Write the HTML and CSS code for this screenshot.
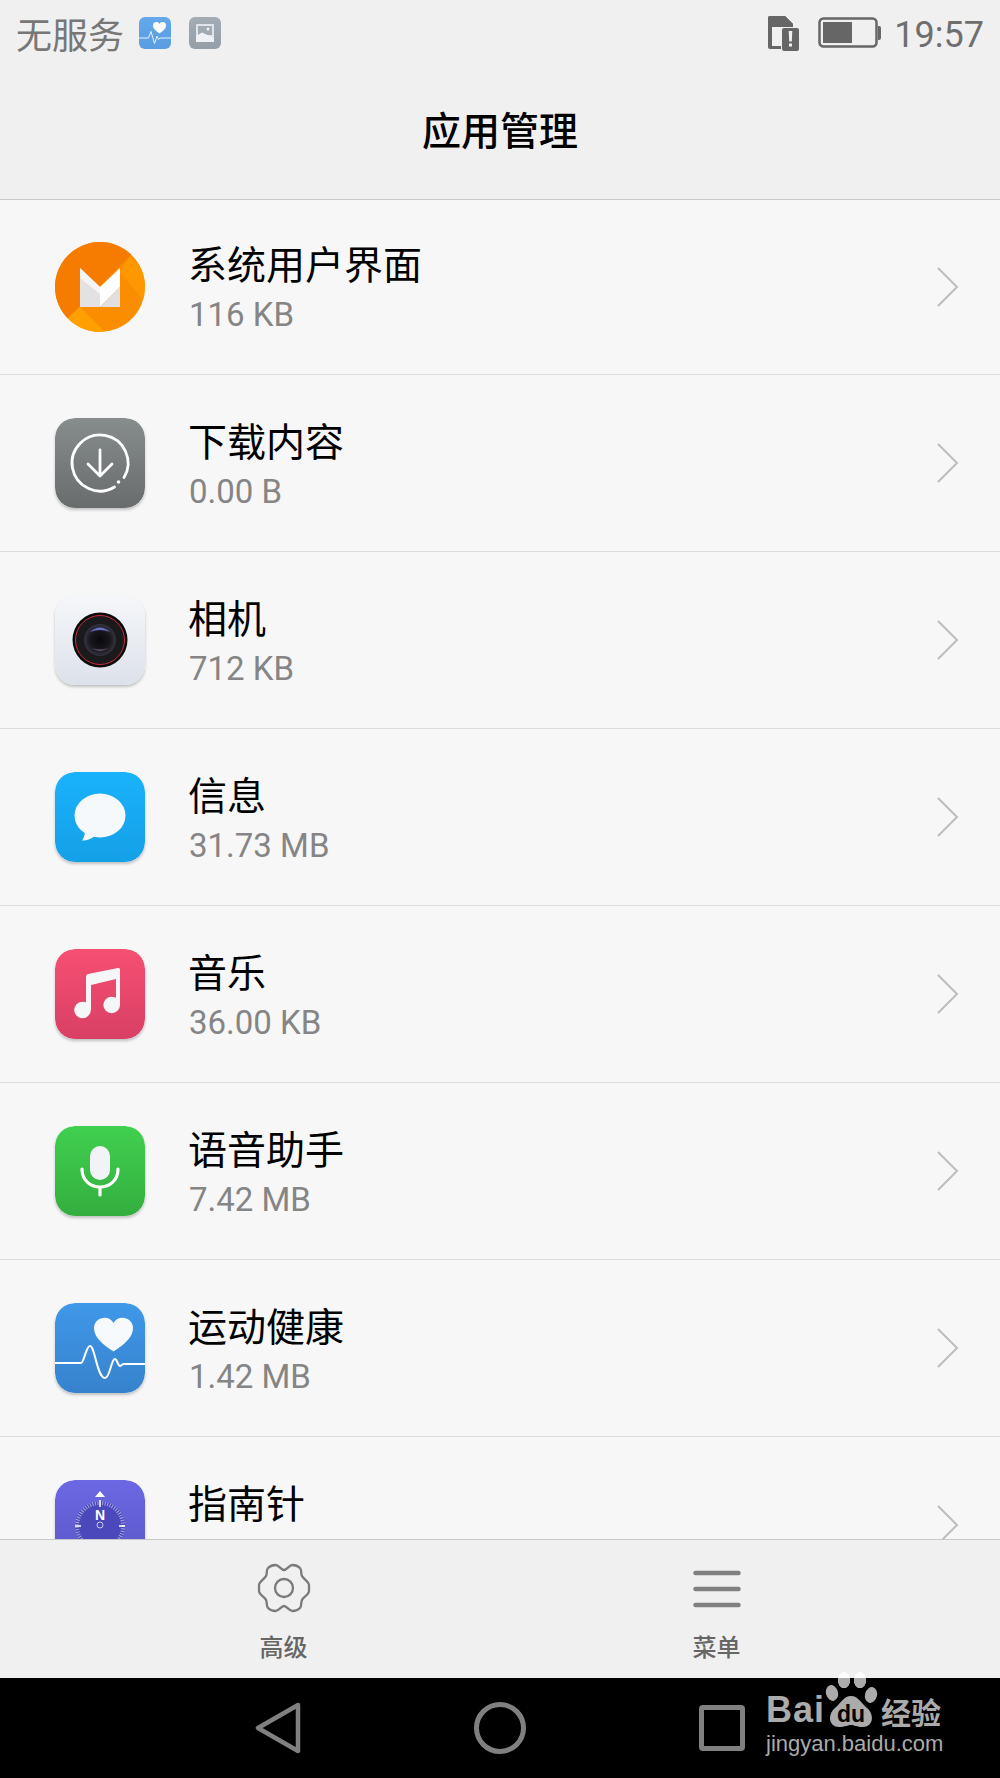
FILE: index.html
```html
<!DOCTYPE html>
<html lang="zh">
<head>
    <meta charset="utf-8">
    <title>应用管理</title>
    <link rel="stylesheet" href="styles.css">
</head>
<body>
<svg class="defs" width="0" height="0">
    <symbol id="chevron" viewBox="0 0 22 40">
        <path d="M1 1L20 20L1 39" fill="none" stroke="#bdbdbd" stroke-width="2"/>
    </symbol>
</svg>
<div class="screen">
    <header class="top">
        <div class="status">
            <div class="status-left">
                <span class="carrier">无服务</span>
                <svg class="note-icon" viewBox="0 0 32 32">
                    <defs><linearGradient id="nh" x1="0" y1="0" x2="0" y2="1"><stop offset="0" stop-color="#63a9ec"/><stop offset="1" stop-color="#5a9ce0"/></linearGradient></defs>
                    <rect width="32" height="32" rx="6" fill="url(#nh)"/>
                    <path d="M20.500 16.500C17 14 14 11.500 14 8.500C14 4.500 19 4 20.500 7C22 4 27 4.500 27 8.500C27 11.500 24 14 20.500 16.500Z" fill="#fff"/>
                    <path d="M0 21H9.500L12 14.500L15.500 26.500L18 19L19.500 22.500L21 21H32" fill="none" stroke="#e6f1fb" stroke-width="1"/>
                </svg>
                <svg class="note-icon" viewBox="0 0 32 32">
                    <defs><linearGradient id="ng" x1="0" y1="0" x2="0" y2="1"><stop offset="0" stop-color="#a3adb5"/><stop offset="1" stop-color="#949ea7"/></linearGradient></defs>
                    <rect width="32" height="32" rx="6" fill="url(#ng)"/>
                    <rect x="7" y="7" width="18" height="18" rx="1" fill="#dfe5ea"/>
                    <rect x="9" y="9" width="14" height="9" fill="#a0aab3"/>
                    <circle cx="19" cy="12" r="1.500" fill="#eef2f5"/>
                    <path d="M7 19L13 15.500L25 21V25H7Z" fill="#eef2f5"/>
                </svg>
            </div>
            <div class="status-right">
                <svg class="sim-icon" viewBox="0 0 32 36">
                    <path fill-rule="evenodd" d="M3 1H18L26 9V12H19V5H5V31H14V34H3Q1 34 1 32V3Q1 1 3 1Z" fill="#666"/>
                    <path d="M1 3Q1 1 3 1H18L26 9V12H1Z" fill="#666"/>
                    <rect x="15" y="13" width="17" height="23" rx="2" fill="#666"/>
                    <path d="M21.700 16H25.300L24.800 26.500H22.200Z" fill="#f0f0f0"/>
                    <rect x="22" y="28.500" width="3" height="3" fill="#f0f0f0"/>
                </svg>
                <svg class="battery-icon" viewBox="0 0 63 32">
                    <rect x="1.500" y="1.500" width="57" height="28" rx="4" fill="none" stroke="#666" stroke-width="2.500"/>
                    <rect x="5" y="5" width="29" height="21" fill="#666"/>
                    <path d="M60 9H61Q63 9 63 11V21Q63 23 61 23H60Z" fill="#666"/>
                </svg>
                <span class="clock">19:57</span>
            </div>
        </div>
        <h1 class="page-title">应用管理</h1>
    </header>

    <main class="list">
        <div class="row">
            <svg class="app-icon" viewBox="0 0 90 90">
                <defs><clipPath id="mclip"><circle cx="45" cy="45" r="45"/></clipPath></defs>
                <g clip-path="url(#mclip)">
                    <rect width="90" height="90" fill="#fb8e00"/>
                    <path d="M75 14L90 29V60L65 30Z" fill="#ff9800"/>
                    <path d="M0 90L13 76L75 14L90 0H0Z" fill="#f57c00"/>
                    <path d="M13 76L25 65L50 90H20Z" fill="#ffa000"/>
                </g>
                <path d="M25 26L45 45V65H25Z" fill="#e2e2e2"/>
                <path d="M25 26L45 45V52L25 36Z" fill="#f5f5f5"/>
                <path d="M65 26V45L45 65V45Z" fill="#fff"/>
                <path d="M65 45V65H45Z" fill="#e0e0e0"/>
            </svg>
            <div class="row-text">
                <div class="app-name">系统用户界面</div>
                <div class="app-size">116 KB</div>
            </div>
            <svg class="chevron"><use href="#chevron"/></svg>
        </div>
        <div class="row">
            <svg class="app-icon squircle" viewBox="0 0 90 90">
                <defs><linearGradient id="g1" x1="0" y1="0" x2="0" y2="1"><stop offset="0" stop-color="#878c8c"/><stop offset="1" stop-color="#686c6c"/></linearGradient></defs>
                <rect width="90" height="90" rx="20" fill="url(#g1)"/>
                <path d="M59.500 69A28 28 0 1 1 69 59.500" fill="none" stroke="#fff" stroke-width="2.800" stroke-linecap="round"/>
                <circle cx="63.500" cy="64" r="1.800" fill="#fff"/>
                <path d="M45 32V58M33 46L45 58L57 46" fill="none" stroke="#fff" stroke-width="2.800" stroke-linecap="round" stroke-linejoin="round"/>
            </svg>
            <div class="row-text">
                <div class="app-name">下载内容</div>
                <div class="app-size">0.00 B</div>
            </div>
            <svg class="chevron"><use href="#chevron"/></svg>
        </div>
        <div class="row">
            <svg class="app-icon squircle" viewBox="0 0 90 90">
                <defs>
                    <linearGradient id="g2" x1="0" y1="0" x2="0" y2="1"><stop offset="0" stop-color="#f5f7fa"/><stop offset="1" stop-color="#dde1e9"/></linearGradient>
                    <radialGradient id="lens" cx=".5" cy=".5" r=".5"><stop offset="0" stop-color="#08080a"/><stop offset=".6" stop-color="#18171c"/><stop offset="1" stop-color="#34323e"/></radialGradient>
                </defs>
                <rect width="90" height="90" rx="20" fill="url(#g2)"/>
                <circle cx="45" cy="45" r="27.500" fill="#0b0b0b"/>
                <circle cx="45" cy="45" r="24.500" fill="#1a1a1c" stroke="#c9303f" stroke-width="1"/>
                <circle cx="45" cy="45" r="16" fill="url(#lens)"/>
                <path d="M35 37Q45 28 55 37Q45 33 35 37Z" fill="#6a70c4"/>
                <path d="M37 53Q45 59 53 53Q45 56 37 53Z" fill="#6a5570"/>
            </svg>
            <div class="row-text">
                <div class="app-name">相机</div>
                <div class="app-size">712 KB</div>
            </div>
            <svg class="chevron"><use href="#chevron"/></svg>
        </div>
        <div class="row">
            <svg class="app-icon squircle" viewBox="0 0 90 90">
                <defs><linearGradient id="g3" x1="0" y1="0" x2="0" y2="1"><stop offset="0" stop-color="#1ab2fc"/><stop offset="1" stop-color="#14a0e6"/></linearGradient></defs>
                <rect width="90" height="90" rx="20" fill="url(#g3)"/>
                <ellipse cx="45" cy="43.500" rx="25.500" ry="22" fill="#f5f9fc"/>
                <path d="M30 57Q30 65 27 68.500Q33 69 40 64Z" fill="#f5f9fc"/>
            </svg>
            <div class="row-text">
                <div class="app-name">信息</div>
                <div class="app-size">31.73 MB</div>
            </div>
            <svg class="chevron"><use href="#chevron"/></svg>
        </div>
        <div class="row">
            <svg class="app-icon squircle" viewBox="0 0 90 90">
                <defs><linearGradient id="g4" x1="0" y1="0" x2="0" y2="1"><stop offset="0" stop-color="#f64f73"/><stop offset="1" stop-color="#d84064"/></linearGradient></defs>
                <rect width="90" height="90" rx="20" fill="url(#g4)"/>
                <circle cx="27.500" cy="61" r="8.300" fill="#f5f6f8"/>
                <circle cx="56.700" cy="56" r="8.300" fill="#f5f6f8"/>
                <path d="M31 60V28Q31 25.500 33 25L63 19Q65 18.600 65 20.500V57H61V30L36 36V61Z" fill="#f5f6f8"/>
            </svg>
            <div class="row-text">
                <div class="app-name">音乐</div>
                <div class="app-size">36.00 KB</div>
            </div>
            <svg class="chevron"><use href="#chevron"/></svg>
        </div>
        <div class="row">
            <svg class="app-icon squircle" viewBox="0 0 90 90">
                <defs><linearGradient id="g5" x1="0" y1="0" x2="0" y2="1"><stop offset="0" stop-color="#40d04f"/><stop offset="1" stop-color="#34ae3f"/></linearGradient></defs>
                <rect width="90" height="90" rx="20" fill="url(#g5)"/>
                <rect x="35" y="20" width="20" height="34" rx="10" fill="#f1f3f6"/>
                <path d="M27 43C27 54 35 61 45 61C55 61 63 54 63 43M45 61V69" fill="none" stroke="#fff" stroke-width="3.200" stroke-linecap="round"/>
            </svg>
            <div class="row-text">
                <div class="app-name">语音助手</div>
                <div class="app-size">7.42 MB</div>
            </div>
            <svg class="chevron"><use href="#chevron"/></svg>
        </div>
        <div class="row">
            <svg class="app-icon squircle" viewBox="0 0 90 90">
                <defs><linearGradient id="g6" x1="0" y1="0" x2="0" y2="1"><stop offset="0" stop-color="#3f98e9"/><stop offset="1" stop-color="#3782cd"/></linearGradient></defs>
                <rect width="90" height="90" rx="20" fill="url(#g6)"/>
                <path d="M58.500 48.500C47 41 39 34 39 25C39 14 54 11 58.500 20C63 11 78 14 78 25C78 34 70 41 58.500 48.500Z" fill="#f6fafd"/>
                <path d="M0 60H26C29 60 31 43 35 43C40 43 42 75 50 75C55 75 56 56 60 56C62 56 63 63 65 63C66 63 67 61 69 61H90" fill="none" stroke="#fff" stroke-width="2"/>
            </svg>
            <div class="row-text">
                <div class="app-name">运动健康</div>
                <div class="app-size">1.42 MB</div>
            </div>
            <svg class="chevron"><use href="#chevron"/></svg>
        </div>
        <div class="row">
            <svg class="app-icon squircle" viewBox="0 0 90 90">
                <defs><linearGradient id="g7" x1="0" y1="0" x2="0" y2="1"><stop offset="0" stop-color="#6c68e4"/><stop offset="1" stop-color="#5856c4"/></linearGradient></defs>
                <rect width="90" height="90" rx="20" fill="url(#g7)"/>
                <circle cx="45" cy="46" r="25" fill="#4a48ba"/>
                <circle cx="45" cy="46" r="23" fill="none" stroke="#a9a8e2" stroke-width="4" stroke-dasharray="1 1.500"/>
                <path d="M45 11L50 17H40Z" fill="#fff"/>
                <path d="M45 20V27M20 46H26M64 46H70" stroke="#fff" stroke-width="1.500"/>
                <text class="compass-n" x="45" y="40" text-anchor="middle">N</text>
                <circle cx="45" cy="45" r="3" fill="none" stroke="#c9c8ee" stroke-width="1"/>
            </svg>
            <div class="row-text">
                <div class="app-name">指南针</div>
                <div class="app-size">&nbsp;</div>
            </div>
            <svg class="chevron"><use href="#chevron"/></svg>
        </div>
    </main>

    <footer class="actions">
        <div class="action">
            <svg class="action-icon" viewBox="0 0 54 50">
                <path d="M27 7C30 7 32 2 35.500 2C38 2 41 3 43 5C45 7 43.500 10 45 13C46.500 16 52 18.500 52 22V28C52 31.500 46.500 34 45 37C43.500 40 45 43 43 45C41 47 38 48 35.500 48C32 48 30 43 27 43C24 43 22 48 18.500 48C16 48 13 47 11 45C9 43 10.500 40 9 37C7.500 34 2 31.500 2 28V22C2 18.500 7.500 16 9 13C10.500 10 9 7 11 5C13 3 16 2 18.500 2C22 2 24 7 27 7Z" fill="none" stroke="#7a7a7a" stroke-width="2.300"/>
                <circle cx="27" cy="25" r="9" fill="none" stroke="#7a7a7a" stroke-width="2.300"/>
            </svg>
            <span class="action-label">高级</span>
        </div>
        <div class="action">
            <svg class="action-icon" viewBox="0 0 54 50">
                <path d="M5.500 10H48.500M5.500 26H48.500M5.500 42H48.500" stroke="#808080" stroke-width="4.500" stroke-linecap="round"/>
            </svg>
            <span class="action-label">菜单</span>
        </div>
    </footer>

    <nav class="navbar">
        <svg class="nav-back" viewBox="0 0 46 52">
            <path d="M43 3L3 26L43 49Z" fill="none" stroke="#808080" stroke-width="4.500" stroke-linejoin="round"/>
        </svg>
        <div class="nav-home"></div>
        <div class="nav-recent"></div>
    </nav>

    <div class="watermark">
        <div class="wm-brand">
            <span class="wm-bai">Bai</span>
            <svg class="wm-paw" viewBox="0 0 56 58">
                <defs><clipPath id="overbar"><rect x="0" y="6" width="56" height="52"/></clipPath></defs>
                <ellipse cx="19" cy="8" rx="6" ry="8" fill="#fff"/>
                <ellipse cx="35" cy="8" rx="6" ry="8" fill="#fff"/>
                <ellipse cx="7" cy="21" rx="6" ry="8" fill="#ababab" transform="rotate(-15 7 21)"/>
                <g clip-path="url(#overbar)">
                    <ellipse cx="19" cy="8" rx="6" ry="8" fill="#ababab"/>
                    <ellipse cx="35" cy="8" rx="6" ry="8" fill="#ababab"/>
                </g>
                <ellipse cx="46" cy="23" rx="6" ry="8" fill="#ababab" transform="rotate(15 46 23)"/>
                <path d="M26 24C33 24 35 30 42 36C50 43 48 55 38 55C32 55 29 53 26 53C23 53 20 55 14 55C4 55 2 43 10 36C17 30 19 24 26 24Z" fill="#ababab"/>
                <text class="wm-du" x="26" y="50" text-anchor="middle">du</text>
            </svg>
            <span class="wm-jy">经验</span>
        </div>
        <div class="wm-url">jingyan.baidu.com</div>
    </div>
</div>
</body>
</html>
```

FILE: styles.css
```css
body {
    margin: 0;
    font-family: "Noto Sans CJK SC", sans-serif;
}
.defs {
    position: absolute;
}
.screen {
    position: relative;
    display: flex;
    flex-direction: column;
    width: 1000px;
    height: 1778px;
    overflow: hidden;
    background-color: #f7f7f7;
}

/* top bar */
.top {
    flex: none;
    height: 199px;
    background-color: #f0f0f0;
    border-bottom: 1px solid #c8c8c8;
}
.status {
    display: flex;
    justify-content: space-between;
    align-items: center;
    height: 66px;
    padding: 0 16px;
}
.status-left, .status-right {
    display: flex;
    align-items: center;
}
.carrier {
    font-size: 36px;
    line-height: 66px;
    color: #777;
}
.note-icon {
    width: 32px;
    height: 32px;
    margin-left: 18px;
}
.carrier + .note-icon {
    margin-left: 15px;
}
.sim-icon {
    width: 32px;
    height: 36px;
}
.battery-icon {
    width: 63px;
    height: 32px;
    margin-left: 19px;
}
.clock {
    margin-left: 13px;
    padding-top: 3px;
    font-family: Roboto, sans-serif;
    font-size: 36px;
    color: #6e6e6e;
}
.page-title {
    margin: 0;
    font-size: 39px;
    font-weight: 500;
    line-height: 125px;
    text-align: center;
    color: #000;
}

/* list */
.list {
    flex: 1;
    min-height: 0;
    overflow: hidden;
}
.row {
    display: flex;
    align-items: center;
    box-sizing: border-box;
    flex: none;
    height: 177px;
    padding: 0 41px 0 55px;
    border-bottom: 1px solid #dcdcdc;
}
.row:first-child {
    height: 175px;
}
.app-icon {
    flex: none;
    width: 90px;
    height: 90px;
}
.squircle {
    border-radius: 20px;
    box-shadow: 0 2px 3px rgba(0, 0, 0, 0.22);
}
.row-text {
    margin-left: 44px;
    margin-top: 2px;
}
.row:first-child .row-text {
    margin-top: 0;
}
.app-name {
    margin-bottom: 5px;
    margin-left: -1px;
    font-size: 39px;
    line-height: 50px;
    color: #000;
}
.app-size {
    font-family: Roboto, sans-serif;
    font-size: 33px;
    line-height: 46px;
    color: #858585;
}
.chevron {
    flex: none;
    width: 22px;
    height: 40px;
    margin-left: auto;
}
.compass-n {
    font-family: "Liberation Sans", sans-serif;
    font-size: 14px;
    font-weight: bold;
    fill: #fff;
}

/* bottom actions */
.actions {
    flex: none;
    display: flex;
    box-sizing: border-box;
    height: 139px;
    padding: 0 67px;
    background-color: #f0f0f0;
    border-top: 1px solid #c8c8c8;
}
.action {
    flex: 1;
    display: flex;
    flex-direction: column;
    align-items: center;
    padding-top: 23px;
}
.action-icon {
    width: 54px;
    height: 50px;
}
.action-label {
    margin-top: 16px;
    font-size: 24px;
    font-weight: 500;
    line-height: 34px;
    color: #666;
}

/* android nav */
.navbar {
    flex: none;
    display: flex;
    align-items: center;
    justify-content: center;
    gap: 173px;
    height: 100px;
    background-color: #000;
}
.nav-back {
    width: 46px;
    height: 52px;
}
.nav-home {
    box-sizing: border-box;
    width: 52px;
    height: 52px;
    border: 5px solid #808080;
    border-radius: 50%;
}
.nav-recent {
    box-sizing: border-box;
    width: 46px;
    height: 46px;
    border: 5px solid #808080;
    border-radius: 4px;
}

/* watermark over the nav bar */
.watermark {
    position: absolute;
    left: 766px;
    top: 1672px;
    width: 190px;
    color: #ababab;
}
.wm-brand {
    display: flex;
    align-items: flex-end;
    height: 58px;
}
.wm-bai {
    font-family: "Liberation Sans", sans-serif;
    font-size: 36px;
    font-weight: bold;
    line-height: 40px;
    letter-spacing: 1px;
}
.wm-paw {
    flex: none;
    width: 56px;
    height: 58px;
}
.wm-du {
    font-family: "Liberation Sans", sans-serif;
    font-size: 23px;
    font-weight: bold;
    fill: #000;
}
.wm-jy {
    font-size: 30px;
    font-weight: 700;
    line-height: 38px;
    white-space: nowrap;
}
.wm-url {
    font-family: "Liberation Sans", sans-serif;
    font-size: 22px;
    line-height: 26px;
    margin-top: 1px;
    white-space: nowrap;
}
```
